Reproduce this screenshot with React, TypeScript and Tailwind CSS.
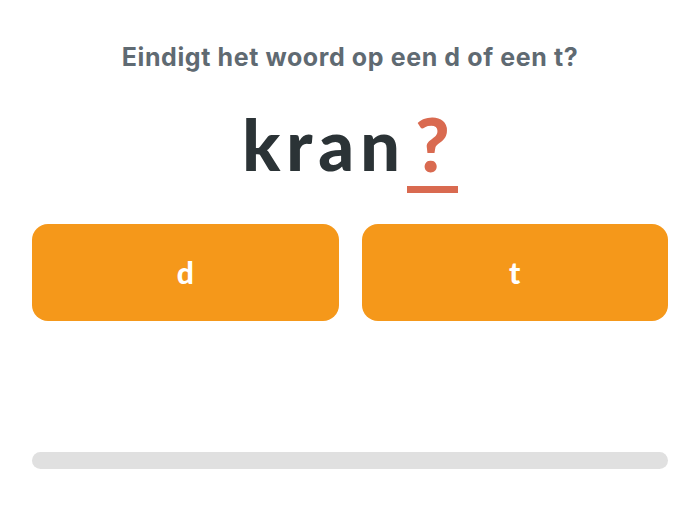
import React from "react";

export default function App() {
  return (
    <div className="w-[700px] h-[514px] bg-white flex flex-col items-center px-8" style={{ fontFamily: "Lato, 'Noto Sans', sans-serif" }}>
      <h1 className="mt-[41px] text-[25px] leading-[32px] font-bold text-[#5f6a72] tracking-[0.6px]" style={{ fontFamily: "Inter, Lato, sans-serif" }}>
        Eindigt het woord op een d of een t?
      </h1>
      <div className="mt-[31px] flex items-start">
        <span className="text-[70px] leading-[80px] font-black text-[#2b3336] tracking-[6px]">kran</span>
        <span className="ml-[1px] flex flex-col items-center w-[51px]">
          <span className="text-[74px] leading-[80px] font-black text-[#d96a50]">?</span>
          <span className="mt-[2px] block w-[51px] h-[7px] bg-[#d96a50]"></span>
        </span>
      </div>
      <div className="mt-[31px] w-full grid grid-cols-2 gap-[23px]">
        <button className="h-[97px] rounded-[16px] bg-[#f5981a] text-white text-[30px] font-black">d</button>
        <button className="h-[97px] rounded-[16px] bg-[#f5981a] text-white text-[30px] font-black">t</button>
      </div>
      <div className="mt-[131px] w-full h-[17px] rounded-full bg-[#e0e0e0]"></div>
    </div>
  );
}
